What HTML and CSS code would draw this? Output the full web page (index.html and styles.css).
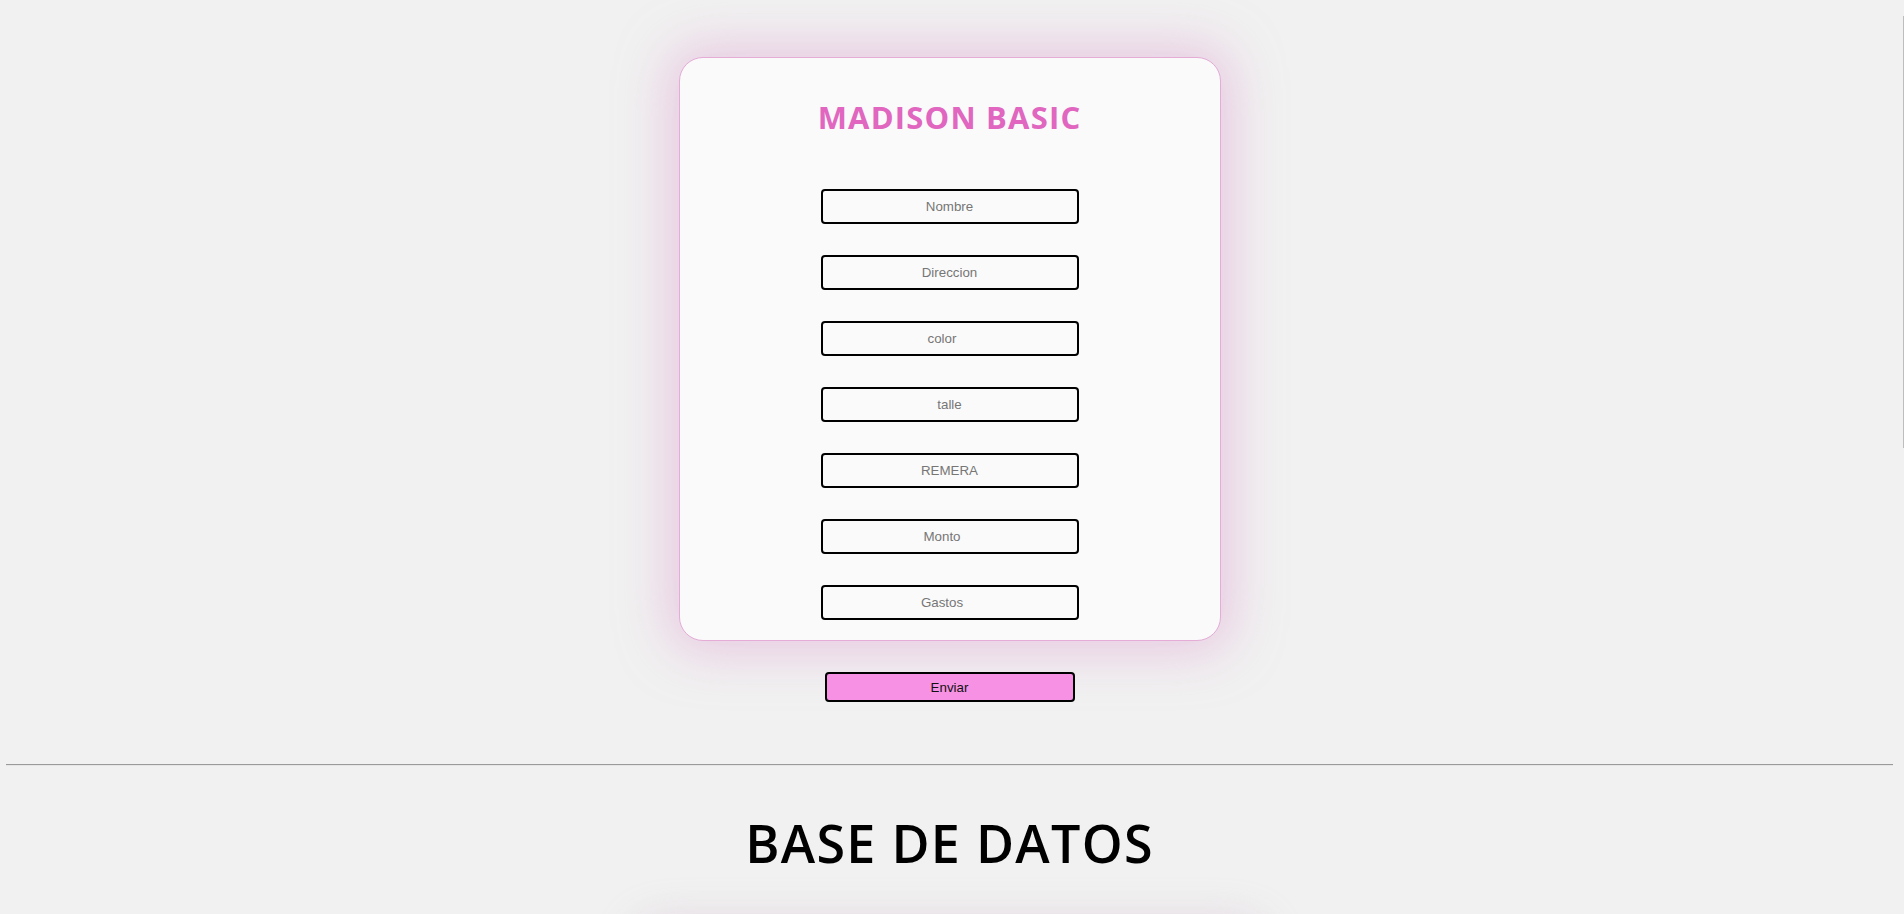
FILE: index.html
```html
<!DOCTYPE html>
<html lang="es">
<head>
<meta charset="utf-8">
<title>Madison Basic</title>
<link rel="stylesheet" href="styles.css">
</head>
<body>
<div class="page">
  <section class="form-section">
    <form class="card">
      <h1 class="title">MADISON BASIC</h1>
      <div class="fields">
        <input class="field" type="text" placeholder="Nombre">
        <input class="field" type="text" placeholder="Direccion">
        <input class="field" type="number" placeholder="color">
        <input class="field" type="text" placeholder="talle">
        <input class="field" type="text" placeholder="REMERA">
        <input class="field" type="number" placeholder="Monto">
        <input class="field" type="number" placeholder="Gastos">
      </div>
    </form>
    <button class="send" type="button">Enviar</button>
  </section>
  <hr class="divider">
  <h2 class="db-title">BASE DE DATOS</h2>
  <div class="db-card"></div>
</div>
<div class="scroll-thumb"></div>
</body>
</html>
```
FILE: styles.css
```css
html {
  overflow: hidden;
}
body {
  margin: 0;
  background: #f1f1f1;
  font-family: "Open Sans", "Liberation Sans", sans-serif;
}
.page {
  margin: 0 11px 0 6px;
}
.form-section {
  padding-top: 57px;
  display: flex;
  flex-direction: column;
  align-items: center;
}
.card {
  box-sizing: border-box;
  width: 542px;
  height: 584px;
  background: #fafafa;
  border: 1px solid #e4acd6;
  border-radius: 24px;
  box-shadow: 0 0 50px 10px rgba(224, 165, 212, 0.55);
  padding-top: 38px;
  display: flex;
  flex-direction: column;
  align-items: center;
}
.title {
  margin: 0;
  font-family: "Open Sans", sans-serif;
  font-weight: 700;
  font-size: 31px;
  letter-spacing: 1.2px;
  color: #e066c0;
}
.fields {
  margin-top: 51px;
  display: flex;
  flex-direction: column;
  gap: 31px;
}
.field {
  box-sizing: border-box;
  width: 258px;
  height: 35px;
  border: 2px solid #000;
  border-radius: 4px;
  background: transparent;
  text-align: center;
  font-family: "Liberation Sans", Arial, sans-serif;
  font-size: 13.333px;
  padding: 1px 2px;
  margin: 0;
}
.field::placeholder {
  color: #767676;
}
.send {
  box-sizing: border-box;
  margin-top: 31px;
  width: 250px;
  height: 30px;
  background: #f791e3;
  border: 2px solid #000;
  border-radius: 4px;
  color: #111;
  font-family: "Liberation Sans", Arial, sans-serif;
  font-size: 13.333px;
  padding: 0;
}
.divider {
  margin: 62px 0 0 0;
  border: 0;
  border-top: 1px solid #9a9a9a;
  border-bottom: 1px solid #e6e6e6;
}
.db-title {
  margin: 41px 0 0 0;
  text-align: center;
  font-family: "Open Sans", sans-serif;
  font-weight: 600;
  font-size: 52px;
  letter-spacing: 1.3px;
  color: #000;
}
.db-card {
  width: 620px;
  height: 300px;
  margin: 48px auto 0;
  background: #f6f6f6;
  border-radius: 24px;
  box-shadow: 0 0 40px 4px rgba(205, 175, 198, 0.45);
}
.scroll-thumb {
  position: fixed;
  right: 0;
  top: 16px;
  width: 1px;
  height: 432px;
  background: #bdbdbd;
}
```
